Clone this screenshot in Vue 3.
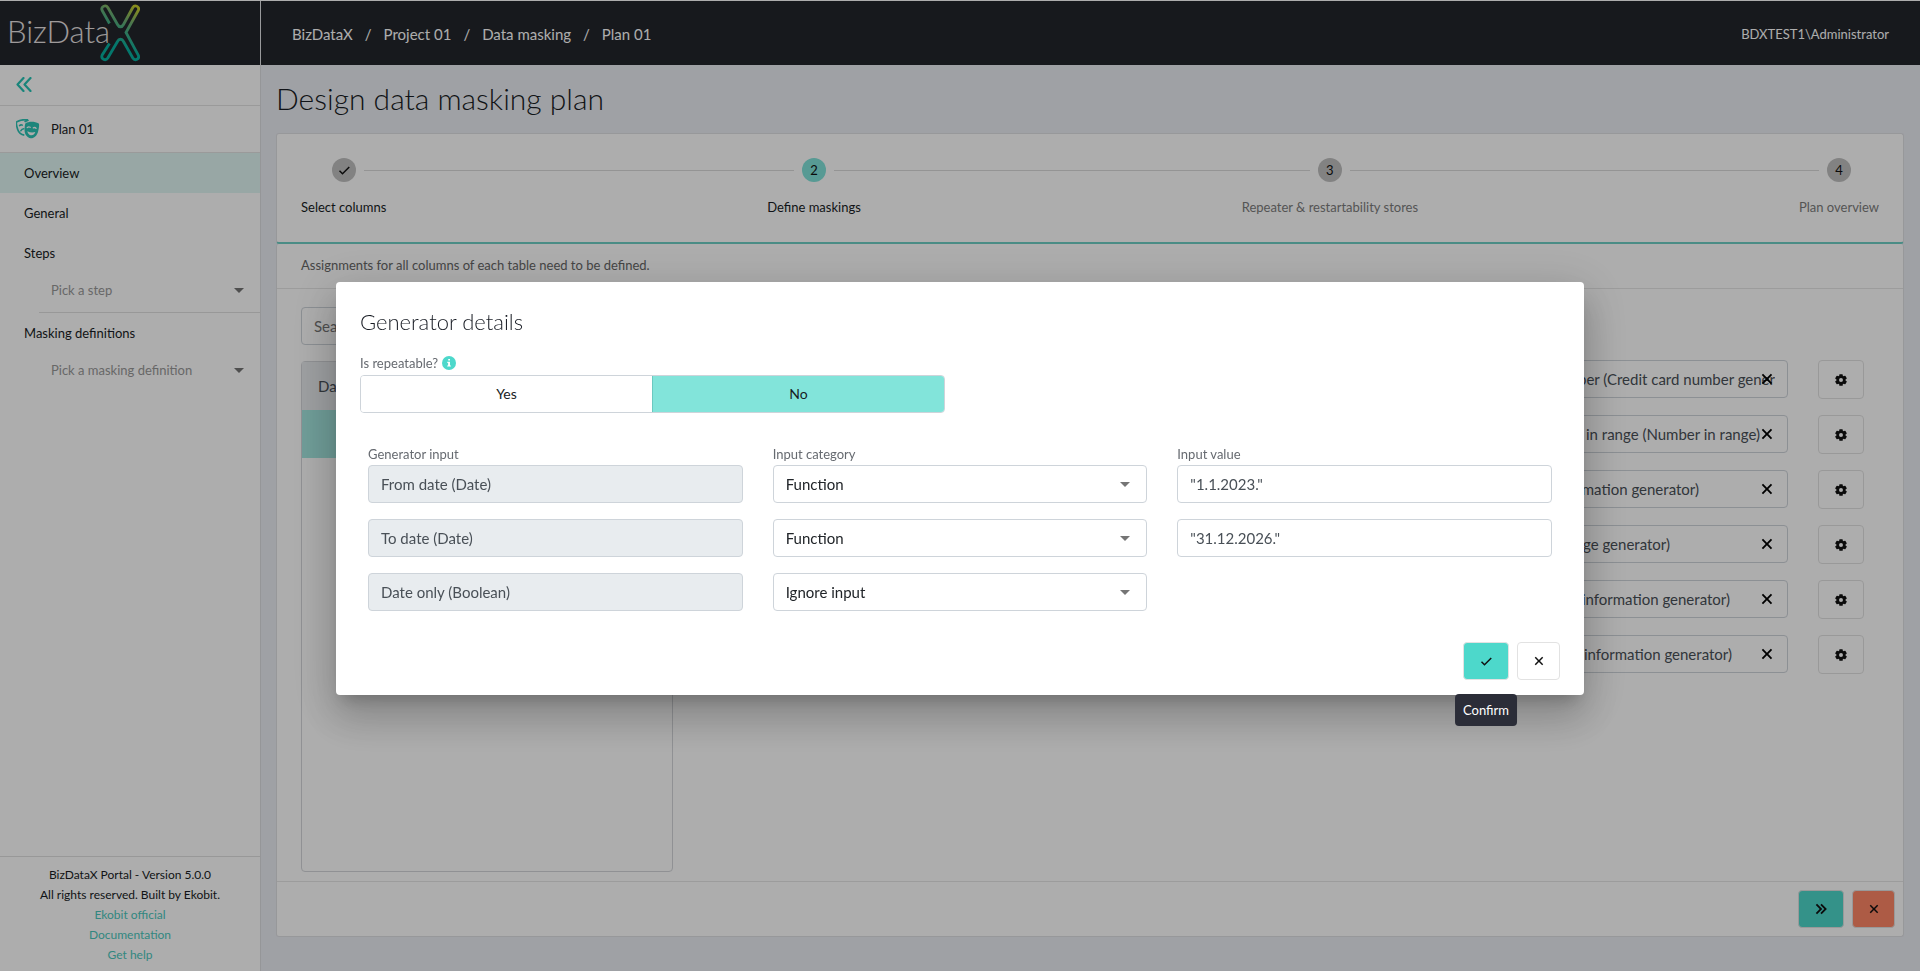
<script setup>
import { ref } from 'vue'

const icons = {
  check: 'm10 15.586-3.293-3.293-1.414 1.414L10 18.414l9.707-9.707-1.414-1.414z',
  close: 'm16.192 6.344-4.243 4.242-4.242-4.242-1.414 1.414L10.535 12l-4.242 4.242 1.414 1.414 4.242-4.242 4.243 4.242 1.414-1.414L13.364 12l4.242-4.242z',
  chevrons: 'M7.707 6.293 6.293 7.707 10.586 12l-4.293 4.293 1.414 1.414L13.414 12zM12.707 6.293l-1.414 1.414L15.586 12l-4.293 4.293 1.414 1.414L18.414 12z',
  cog: 'm2.344 15.271 2 3.46a1 1 0 0 0 1.366.365l1.396-.806c.58.457 1.221.832 1.895 1.112V21a1 1 0 0 0 1 1h4a1 1 0 0 0 1-1v-1.598a8.094 8.094 0 0 0 1.895-1.112l1.396.806c.477.275 1.091.11 1.366-.365l2-3.46a1.004 1.004 0 0 0-.365-1.366l-1.372-.793a7.683 7.683 0 0 0-.002-2.224l1.372-.793c.476-.275.641-.89.365-1.366l-2-3.46a1 1 0 0 0-1.366-.365l-1.396.806A8.034 8.034 0 0 0 15 4.598V3a1 1 0 0 0-1-1h-4a1 1 0 0 0-1 1v1.598A8.094 8.094 0 0 0 7.105 5.71L5.71 4.904a.999.999 0 0 0-1.366.365l-2 3.46a1.004 1.004 0 0 0 .365 1.366l1.372.793a7.683 7.683 0 0 0 0 2.224l-1.372.793c-.476.275-.641.89-.365 1.366zM12 8.6a3.4 3.4 0 1 1 0 6.8 3.4 3.4 0 0 1 0-6.8z',
}

const crumbs = ['BizDataX', 'Project 01', 'Data masking', 'Plan 01']

const steps = [
  { label: 'Select columns', done: true },
  { label: 'Define maskings', active: true },
  { label: 'Repeater & restartability stores' },
  { label: 'Plan overview' },
]

// reserve: space kept free on the right of the value, in pixels
const maskings = [
  { value: 'ber (Credit card number gener', reserve: 12 },
  { value: 'in range (Number in range)', reserve: 27 },
  { value: 'mation generator)', reserve: 88 },
  { value: 'ge generator)', reserve: 117 },
  { value: 'information generator)', reserve: 57 },
  { value: 'information generator)', reserve: 55 },
]

const inputs = ref([
  { name: 'From date (Date)', category: 'Function', value: '"1.1.2023."' },
  { name: 'To date (Date)', category: 'Function', value: '"31.12.2026."' },
  { name: 'Date only (Boolean)', category: 'Ignore input', value: null },
])

const repeatable = ref(false)
</script>

<template>
  <div class="app">
    <header class="topbar">
      <a class="brand" href="#">
        <span class="brand-text">BizData</span>
        <svg class="brand-x" viewBox="0 0 40 58" aria-hidden="true">
          <defs>
            <linearGradient id="xg" x1="34" y1="2" x2="14" y2="38" gradientUnits="userSpaceOnUse">
              <stop offset="0" stop-color="#c9cf2c" />
              <stop offset="0.4" stop-color="#6fae72" />
              <stop offset="1" stop-color="#07b0a0" />
            </linearGradient>
          </defs>
          <path d="M9.500 19.500 2.200 6.500C.5 3 5.500 0 7.800 3.500L17.500 20.500C19 23.500 22 23.500 23.500 20.500L32.800 3.500C35 0 40 3 38.200 6.500L26 28.500 38.200 51C40 55 35 57.500 32.800 54L23.500 37.500C22 34.500 19 34.500 17.500 37.500L7.800 54C5.500 57.500.5 55 2.200 51L9.500 39.500" fill="none" stroke="url(#xg)" stroke-width="2.800" />
        </svg>
      </a>
      <nav class="crumbs">
        <template v-for="(c, i) in crumbs" :key="c">
          <span v-if="i" class="slash">/</span>
          <a href="#">{{ c }}</a>
        </template>
      </nav>
      <span class="user">BDXTEST1\Administrator</span>
    </header>

    <div class="body">
      <aside class="sidebar">
        <button class="collapse" aria-label="Collapse menu">
          <svg viewBox="0 0 16 15"><path d="M7.500 1 1.500 7.500l6 6.500M14.500 1 8.500 7.500l6 6.500" fill="none" stroke="currentColor" stroke-width="2.200" stroke-linecap="round" stroke-linejoin="round" /></svg>
        </button>
        <div class="plan">
          <svg class="masks" viewBox="0 0 24 20" aria-hidden="true">
            <path d="M12 .8C8 .4 4 1 .9 2.800 0 3.400.6 7 1.700 10.500c1 3 3 5.200 6.600 5.600" fill="none" stroke="currentColor" stroke-width="1.700" />
            <path d="M3.500 6.600q1.500-1.200 2.800-.4M4.800 11.800q1-1.800 3-2" fill="none" stroke="currentColor" stroke-width="1.500" stroke-linecap="round" />
            <path d="M11.800.1 13 1.800 9 3.600 8 2z" fill="currentColor" />
            <path d="M9.600 4.200C13 2 19 2.200 22.700 4.600c.8.600.4 4.500-.7 8.400-1.200 4.200-4.600 6.700-7.400 6.200-3.500-.6-6-4-6-7.500 0-3 .3-7 1-7.500z" fill="currentColor" />
            <path d="M11.200 8.600q1.400-1.400 3-.3M17.300 8.900q1.600-1 2.800.4" fill="none" stroke="#fff" stroke-width="1.300" stroke-linecap="round" />
            <path d="M11.300 12.200q4 1.900 8 .8-1.400 3.600-4.400 3.200-2.600-.3-3.600-4z" fill="#fff" />
          </svg>
          <span>Plan 01</span>
        </div>
        <nav class="menu">
          <a class="item current" href="#">Overview</a>
          <a class="item" href="#">General</a>
          <label class="item" for="step">Steps</label>
          <div class="pick ruled">
            <select id="step"><option>Pick a step</option></select>
          </div>
          <label class="item" for="definition">Masking definitions</label>
          <div class="pick">
            <select id="definition"><option>Pick a masking definition</option></select>
          </div>
        </nav>
        <footer class="about">
          <span>BizDataX Portal - Version 5.0.0</span>
          <span>All rights reserved. Built by Ekobit.</span>
          <a href="#">Ekobit official</a>
          <a href="#">Documentation</a>
          <a href="#">Get help</a>
        </footer>
      </aside>

      <main class="main">
        <h1>Design data masking plan</h1>
        <section class="stepper">
          <template v-for="(s, i) in steps" :key="s.label">
            <span v-if="i" class="rail"></span>
            <div class="step" :class="{ active: s.active, lit: s.done || s.active }">
              <div class="node">
                <span class="half"></span>
                <span class="dot">
                  <svg v-if="s.done" viewBox="0 0 24 24"><path :d="icons.check" /></svg>
                  <template v-else>{{ i + 1 }}</template>
                </span>
                <span class="half"></span>
              </div>
              <span class="step-label">{{ s.label }}</span>
            </div>
          </template>
        </section>
        <section class="card">
          <p class="hint">Assignments for all columns of each table need to be defined.</p>
          <div class="work">
            <div class="left">
              <input class="field" type="text" placeholder="Search" aria-label="Search" />
              <div class="tables">
                <div class="tables-head">Data</div>
                <div class="tables-row"></div>
              </div>
            </div>
            <div class="right">
              <div v-for="(m, i) in maskings" :key="i" class="masking">
                <div class="generator">
                  <input class="field" type="text" :value="m.value" :style="{ paddingRight: m.reserve + 'px' }" :aria-label="'Generator ' + (i + 1)" />
                  <button class="clear" aria-label="Clear">
                    <svg viewBox="0 0 24 24"><path :d="icons.close" /></svg>
                  </button>
                </div>
                <button class="btn cog" aria-label="Settings">
                  <svg viewBox="0 0 24 24"><path :d="icons.cog" /></svg>
                </button>
              </div>
            </div>
          </div>
          <div class="card-foot">
            <button class="btn teal" aria-label="Next"><svg class="big" viewBox="0 0 24 24"><path :d="icons.chevrons" /></svg></button>
            <button class="btn red" aria-label="Cancel"><svg viewBox="0 0 24 24"><path :d="icons.close" /></svg></button>
          </div>
        </section>
      </main>
    </div>

    <div class="overlay">
      <div class="dialog" role="dialog" aria-labelledby="dialog-title">
        <h2 id="dialog-title">Generator details</h2>
        <div class="question">
          <span>Is repeatable?</span>
          <svg viewBox="0 0 14 14" aria-hidden="true"><circle cx="7" cy="7" r="7" fill="#4dd8cb" /><path d="M6.200 3h1.800v1.600H6.200zM5.300 5.800H8v3.600h.9v1.200H5.200V9.400h.9V7h-.8z" fill="#fff" /></svg>
        </div>
        <div class="toggle">
          <button :class="{ on: repeatable }" @click="repeatable = true">Yes</button>
          <button :class="{ on: !repeatable }" @click="repeatable = false">No</button>
        </div>
        <div class="grid">
          <span class="col-label">Generator input</span>
          <span class="col-label">Input category</span>
          <span class="col-label">Input value</span>
          <template v-for="row in inputs" :key="row.name">
            <input class="field" type="text" :value="row.name" disabled aria-label="Generator input" />
            <select v-model="row.category" class="field" aria-label="Input category">
              <option>Function</option>
              <option>Ignore input</option>
            </select>
            <input v-if="row.value !== null" v-model="row.value" class="field" type="text" aria-label="Input value" />
            <span v-else></span>
          </template>
        </div>
        <div class="actions">
          <div class="tip-host">
            <button class="btn teal" aria-label="Confirm" aria-describedby="tip"><svg viewBox="0 0 24 24"><path :d="icons.check" /></svg></button>
            <span id="tip" class="tip" role="tooltip">Confirm</span>
          </div>
          <button class="btn" aria-label="Close"><svg viewBox="0 0 24 24"><path :d="icons.close" /></svg></button>
        </div>
      </div>
    </div>
  </div>
</template>

<style>
body {
  margin: 0;
}
</style>

<style scoped>
.app,
.app * {
  box-sizing: border-box;
}
.app {
  display: flex;
  flex-direction: column;
  min-height: 100vh;
  font-family: Lato, Carlito, sans-serif;
  font-size: 13px;
  line-height: 20px;
  color: #181c24;
}
button,
input,
select {
  font: inherit;
  color: inherit;
}
a {
  color: inherit;
  text-decoration: none;
}
.topbar {
  display: flex;
  align-items: center;
  height: 65px;
  border-top: 1px solid #fff;
  background: #22252c;
  color: #fff;
}
.brand {
  display: flex;
  align-items: center;
  width: 261px;
  height: 100%;
  padding-left: 7px;
  border-right: 1px solid #e2e3e6;
}
.brand-text {
  font-size: 31px;
  font-weight: 300;
  line-height: 40px;
  color: #e9e4e4;
  margin-bottom: 4px;
}
.brand-x {
  width: 40px;
  height: 58px;
  margin-left: -10px;
}
.crumbs {
  display: flex;
  gap: 12px;
  flex: 1;
  padding: 2px 0 0 31px;
  font-size: 15px;
}
.user {
  margin-right: 31px;
  padding-top: 2px;
}
.body {
  flex: 1;
  display: flex;
}
.sidebar {
  flex: none;
  width: 261px;
  display: flex;
  flex-direction: column;
  background: #fff;
  border-right: 1px solid #dcdde0;
}
.collapse {
  display: flex;
  align-items: center;
  height: 41px;
  padding: 0 16px 2px;
  border: 0;
  border-bottom: 1px solid #e4e4e4;
  background: none;
  color: #26c4b5;
}
.collapse svg {
  width: 16px;
  height: 15px;
}
.plan {
  display: flex;
  align-items: center;
  gap: 11px;
  height: 47px;
  padding-left: 16px;
  border-bottom: 1px solid #e4e4e4;
}
.masks {
  width: 24px;
  height: 20px;
  color: #2cc4b6;
}
.menu {
  flex: 1;
  display: flex;
  flex-direction: column;
}
.item {
  display: block;
  padding: 10px 24px;
}
.current {
  background: #e1f6f3;
}
.pick {
  margin-left: 39px;
  padding-bottom: 4px;
}
.ruled {
  padding-bottom: 5px;
  border-bottom: 1px solid #e0e0e0;
}
select {
  appearance: none;
  background: url("data:image/svg+xml,%3Csvg xmlns='http://www.w3.org/2000/svg' viewBox='0 0 10 5'%3E%3Cpath d='M0 0h10L5 5z' fill='%23757575'/%3E%3C/svg%3E") no-repeat right 16px center / 10px 5px;
}
.pick select {
  width: 100%;
  height: 34px;
  padding: 0 12px;
  border: 0;
  color: #999;
}
.about {
  display: flex;
  flex-direction: column;
  align-items: center;
  padding: 8px 0 6px;
  border-top: 1px solid #e0e0e0;
  font-size: 12px;
}
.about a {
  color: #4bc8bd;
}
.main {
  flex: 1;
  min-width: 0;
  display: flex;
  flex-direction: column;
  padding: 13px 16px 34px 15px;
  background: #ebedf3;
}
h1 {
  margin: 0 0 15px;
  font-size: 30px;
  font-weight: 300;
  line-height: 40px;
}
.stepper {
  display: flex;
  height: 111px;
  padding: 24px;
  background: #fff;
  border: 1px solid #dfe0e4;
  border-bottom: 2px solid #6ecfc5;
  border-radius: 3px;
}
.rail,
.half {
  flex: 1;
  height: 1px;
  background: #dadada;
}
.rail {
  margin-top: 12px;
}
.step {
  display: flex;
  flex-direction: column;
  gap: 15px;
  color: #7d7d7d;
}
.lit {
  color: #181c24;
}
.node {
  display: flex;
  align-items: center;
  gap: 8px;
}
.step:first-child .half:first-child,
.step:last-child .half:last-child {
  visibility: hidden;
}
.dot {
  display: flex;
  align-items: center;
  justify-content: center;
  width: 24px;
  height: 24px;
  border-radius: 50%;
  background: #c0c0c0;
  color: #111;
}
.active .dot {
  background: #80e3da;
}
svg {
  fill: currentColor;
}
.dot svg,
.btn svg {
  width: 18px;
  height: 18px;
}
.card {
  flex: 1;
  display: flex;
  flex-direction: column;
  background: #fff;
  border: 1px solid #dfe0e4;
  border-top: 0;
  border-radius: 3px;
}
.hint {
  margin: 0;
  padding: 11px 24px 13px;
  border-bottom: 1px solid #e6e6e6;
  color: #666;
}
.work {
  flex: 1;
  display: flex;
  justify-content: space-between;
  padding: 18px 39px 9px 24px;
}
.left {
  display: flex;
  flex-direction: column;
  gap: 16px;
  width: 372px;
}
.field {
  width: 100%;
  height: 38px;
  padding: 0 12px;
  border: 1px solid #ced4da;
  border-radius: 4px;
  background-color: #fff;
  font-size: 15px;
  color: #495057;
}
.tables {
  flex: 1;
  border: 1px solid #d4d6da;
  border-radius: 4px;
}
.tables-head {
  height: 48px;
  padding: 14px 16px;
  background: #e9ecef;
  font-size: 15px;
  color: #495057;
}
.tables-row {
  height: 48px;
  background: #a5e8e1;
}
.right {
  display: flex;
  flex-direction: column;
  gap: 16px;
  padding-top: 53px;
}
.masking {
  display: flex;
  align-items: flex-start;
  gap: 30px;
}
.generator {
  display: flex;
  align-items: center;
  position: relative;
  width: 374px;
}
.generator .field {
  text-align: right;
}
.clear {
  display: flex;
  position: absolute;
  right: 10px;
  padding: 0;
  border: 0;
  background: none;
  color: #000;
}
.clear svg {
  width: 22px;
  height: 22px;
}
.btn {
  display: flex;
  align-items: center;
  justify-content: center;
  width: 43px;
  height: 38px;
  padding: 0;
  border: 1px solid #e2e2e2;
  border-radius: 4px;
  background: #fff;
  color: #111;
}
.btn.cog {
  width: 46px;
  height: 39px;
}
.btn.cog svg {
  width: 14px;
  height: 14px;
}
.btn.teal {
  width: 46px;
  background: #4dd8cb;
}
.btn.red {
  background: #ff8766;
}
.btn .big {
  width: 22px;
  height: 22px;
}
.card-foot {
  display: flex;
  justify-content: flex-end;
  gap: 8px;
  padding: 8px;
  border-top: 1px solid #e6e6e6;
}
.overlay {
  position: fixed;
  inset: 0;
  display: flex;
  align-items: center;
  justify-content: center;
  padding-top: 6px;
  background: rgba(0, 0, 0, 0.32);
}
.dialog {
  width: 65%;
  padding: 24px 24px 15px;
  border-radius: 4px;
  background: #fff;
  box-shadow: 0 11px 15px -7px rgba(0, 0, 0, 0.2), 0 24px 38px 3px rgba(0, 0, 0, 0.14), 0 9px 46px 8px rgba(0, 0, 0, 0.12);
}
h2 {
  margin: 0 0 15px;
  font-size: 22px;
  font-weight: 300;
  line-height: 32px;
}
.question {
  display: flex;
  align-items: center;
  gap: 4px;
  height: 20px;
  margin-bottom: 2px;
  color: #666a70;
}
.question svg {
  width: 14px;
  height: 14px;
}
.toggle {
  display: flex;
  width: calc(50% - 15px);
  height: 38px;
  margin-bottom: 31px;
  border: 1px solid #ced4da;
  border-radius: 4px;
  overflow: hidden;
}
.toggle button {
  flex: 1;
  border: 0;
  background: #fff;
  font-size: 14px;
}
.toggle .on {
  background: #82e4da;
  border-left: 1px solid #6bc9c0;
}
.grid {
  display: grid;
  grid-template-columns: repeat(3, minmax(0, 1fr));
  gap: 16px 30px;
  padding: 0 8px;
}
.col-label {
  margin-bottom: -15px;
  color: #666a70;
}
.grid select {
  color: #212529;
}
input:disabled {
  background: #e8ecef;
}
.actions {
  display: flex;
  justify-content: flex-end;
  gap: 8px;
  margin-top: 31px;
}
.tip-host {
  position: relative;
}
.tip {
  position: absolute;
  top: 52px;
  left: 50%;
  transform: translateX(-50%);
  padding: 6px 8px;
  border-radius: 4px;
  background: #2b2d38;
  color: #fff;
}
</style>
